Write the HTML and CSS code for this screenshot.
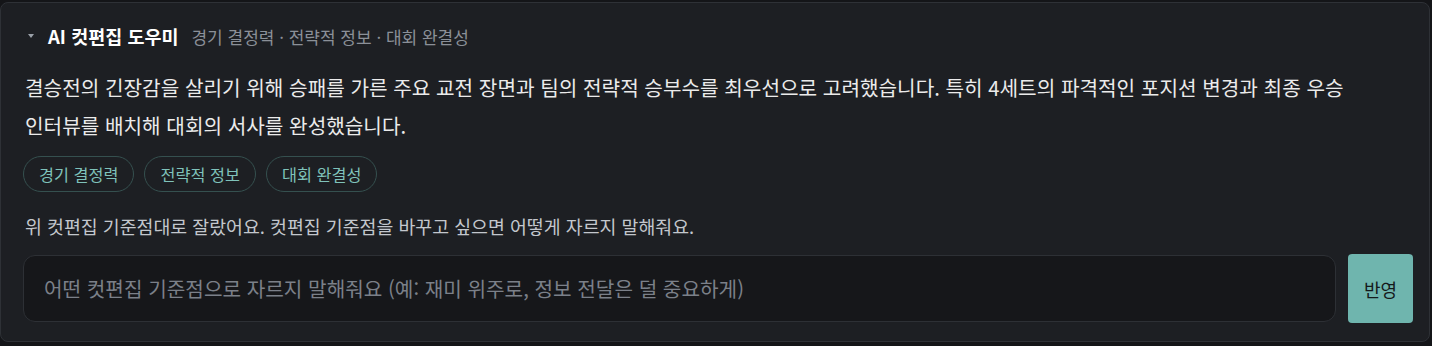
FILE: index.html
```html
<!DOCTYPE html>
<html lang="ko">
<head>
	<meta charset="UTF-8">
	<title>AI 컷편집 도우미</title>
	<link rel="stylesheet" href="styles.css">
</head>
<body>
	<div class="card">
		<div class="head">
			<span class="caret"></span>
			<span class="title">AI 컷편집 도우미</span>
			<span class="sub">경기 결정력 · 전략적 정보 · 대회 완결성</span>
		</div>
		<p class="summary">결승전의 긴장감을 살리기 위해 승패를 가른 주요 교전 장면과 팀의 전략적 승부수를 최우선으로 고려했습니다. 특히 4세트의 파격적인 포지션 변경과 최종 우승 인터뷰를 배치해 대회의 서사를 완성했습니다.</p>
		<div class="chips">
			<span class="chip">경기 결정력</span>
			<span class="chip">전략적 정보</span>
			<span class="chip">대회 완결성</span>
		</div>
		<p class="info">위 컷편집 기준점대로 잘랐어요. 컷편집 기준점을 바꾸고 싶으면 어떻게 자르지 말해줘요.</p>
		<div class="ask">
			<input class="ask_input" type="text" placeholder="어떤 컷편집 기준점으로 자르지 말해줘요 (예: 재미 위주로, 정보 전달은 덜 중요하게)">
			<button class="ask_btn">반영</button>
		</div>
	</div>
</body>
</html>
```

FILE: styles.css
```css
html, body {
	margin: 0;
	background: #141518;
}
body {
	font-family: "Noto Sans CJK KR", "Noto Sans", sans-serif;
	padding: 2px 2px 0 0;
	word-break: keep-all;
}
.card {
	background: #1d1f23;
	border: 1px solid #2e3136;
	border-radius: 8px;
	padding: 21px 16px 18px 22px;
}
.head {
	display: flex;
	align-items: center;
	height: 24px;
}
.caret {
	width: 0;
	height: 0;
	border-left: 3px solid transparent;
	border-right: 3px solid transparent;
	border-top: 4px solid #9aa0a8;
	margin: 0 14px 0 5px;
}
.title {
	color: #ffffff;
	font-weight: 700;
	font-size: 18.5px;
	margin-right: 13px;
}
.sub {
	color: #8b9098;
	font-size: 17px;
}
.summary {
	margin: 21px 0 0;
	padding-left: 2px;
	color: #ebebeb;
	font-size: 20.2px;
	line-height: 38px;
}
.chips {
	display: flex;
	gap: 10px;
	margin-top: 11px;
}
.chip {
	box-sizing: border-box;
	border: 1px solid #35504f;
	border-radius: 18px;
	color: #7fc2ba;
	font-size: 16.3px;
	height: 36px;
	line-height: 34px;
	padding: 0 15px;
}
.info {
	margin: 21px 0 0;
	padding-left: 2px;
	color: #c3c7cd;
	font-size: 18.35px;
	line-height: 26px;
}
.ask {
	display: flex;
	align-items: center;
	gap: 12px;
	margin-top: 15px;
}
.ask_input {
	flex: 1;
	height: 67px;
	box-sizing: border-box;
	background: #16171a;
	border: 1px solid #2d3035;
	border-radius: 12px;
	padding: 0 20px;
	font-family: inherit;
	font-size: 20.2px;
	color: #e0e0e0;
	outline: none;
}
.ask_input::placeholder {
	color: #7b8089;
}
.ask_btn {
	width: 65px;
	height: 69px;
	background: #6fb5ae;
	border: none;
	border-radius: 4px;
	font-family: inherit;
	font-size: 18px;
	color: #15191b;
}
```
